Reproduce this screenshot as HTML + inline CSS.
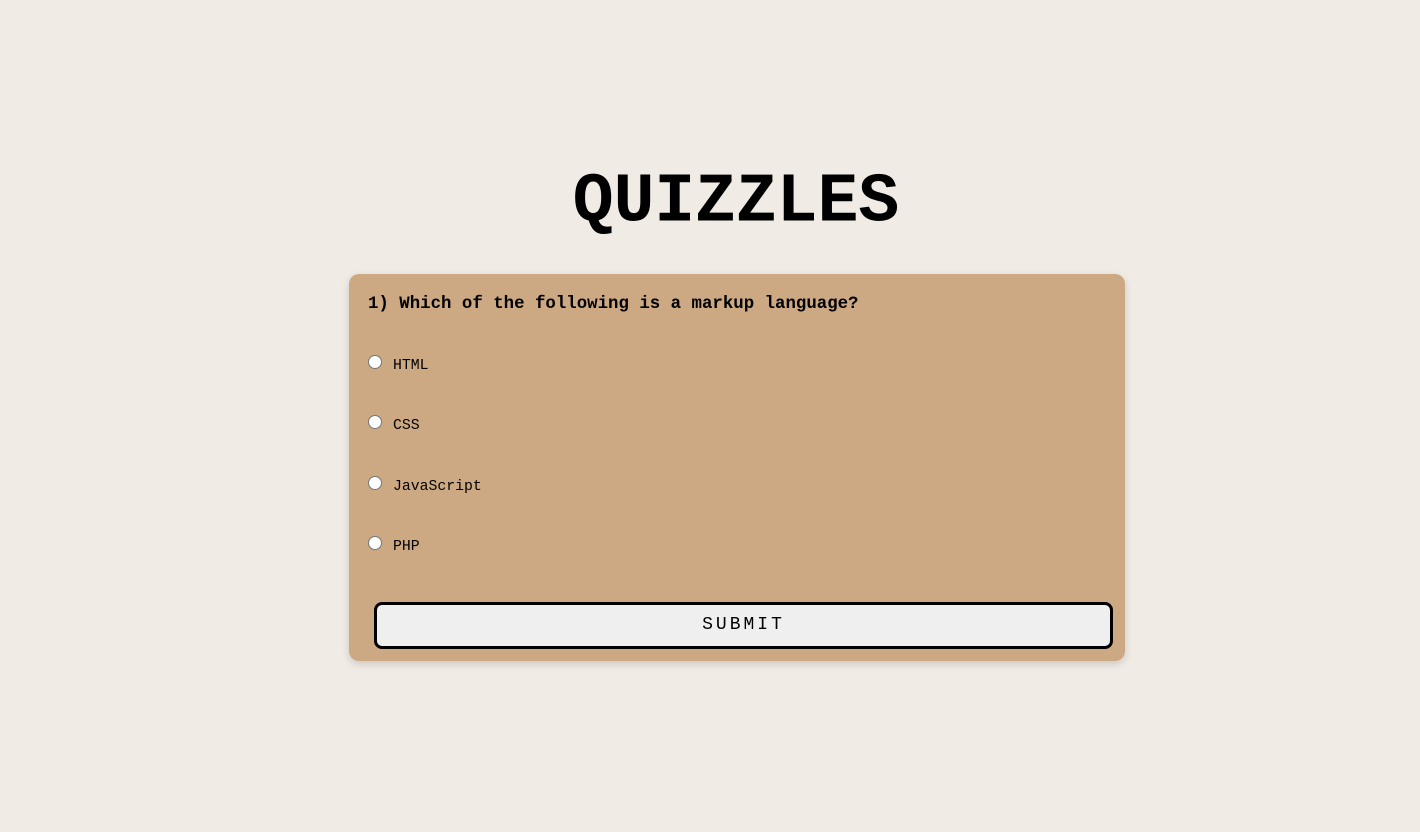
<!DOCTYPE html>
<html><head><style>
html,body{margin:0;padding:0}
body{width:1420px;height:832px;background:#f0ebe4;position:relative;font-family:"Liberation Mono",monospace;overflow:hidden}
h1{position:absolute;left:26px;width:1420px;top:153px;margin:0;text-align:center;font-size:68px;font-weight:bold;line-height:100px;color:#000;transform:scaleY(1.02)}
.card{position:absolute;left:349px;top:274px;width:776px;height:387px;background:#cca983;border-radius:10px;box-shadow:0 3px 8px rgba(0,0,0,0.15)}
.q{position:absolute;left:19px;top:21px;font-size:17.4px;font-weight:bold;color:#000}
.opt{position:absolute;left:19px;font-size:14.8px;color:#000}
.r{position:absolute;left:0;top:-7px;width:12px;height:12px;border:1px solid #777;border-radius:50%;background:#fff}
.opt span{position:absolute;left:25px;top:-4px;white-space:nowrap}
.btn{position:absolute;left:25px;top:328px;width:733px;height:41px;border:3px solid #000;border-radius:8px;background:#efefef;text-align:center;line-height:41px;font-size:18px;letter-spacing:3px;color:#000}
</style></head><body>
<h1>QUIZZLES</h1>
<div class="card">
<div class="q">1) Which of the following is a markup language?</div>
<div class="opt" style="top:88px"><div class="r"></div><span>HTML</span></div>
<div class="opt" style="top:148px"><div class="r"></div><span>CSS</span></div>
<div class="opt" style="top:209px"><div class="r"></div><span>JavaScript</span></div>
<div class="opt" style="top:269px"><div class="r"></div><span>PHP</span></div>
<div class="btn">SUBMIT</div>
</div>
</body></html>
